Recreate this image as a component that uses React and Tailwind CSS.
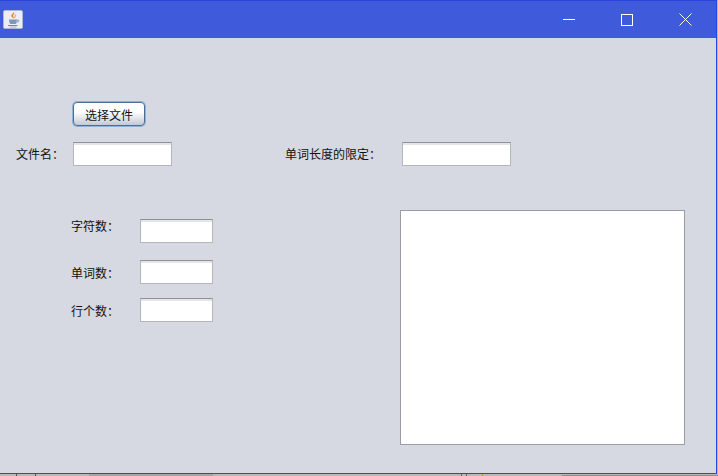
const cjk = 'font-["Noto_Sans_CJK_SC","Liberation_Sans",sans-serif]';

function JavaIcon() {
  return (
    <svg width="20" height="19" viewBox="0 0 20 19" className="block">
      <rect x="0.5" y="0.5" width="19" height="18" rx="1.5" fill="#eceef3" stroke="#aeb6d6" />
      <path d="M11 2c1.4 1.8-1.6 2.8-.8 4.6.3.7.8 1.2 1 1.9-2.3-.7-3.3-2.2-2.8-3.5C8.900 3.700 10.600 3.300 11 2z" fill="#e9802c" />
      <path d="M12.500 4.500c.6 1.300-1.200 1.800-.6 3.500" fill="none" stroke="#f2a45e" strokeWidth="1.200" />
      <path d="M6 9.500h8l-.5 3.500c-.3.800-1 1-1.500 1H8c-.6 0-1.200-.3-1.500-1z" fill="#7f97b8" />
      <path d="M14 10.200h1.500c.8 0 .8 1.800-1.700 2" fill="none" stroke="#7f97b8" />
      <path d="M5 15.500h9.500" stroke="#6f8cb0" />
      <path d="M6.500 17h7" stroke="#a5b6cc" />
    </svg>
  );
}

function WindowButtons() {
  return (
    <div className="flex items-center">
      <div className="flex h-[38px] w-[58px] items-center justify-center">
        <div className="h-px w-3 bg-white" />
      </div>
      <div className="flex h-[38px] w-[58px] items-center justify-center">
        <div className="h-3 w-3 border border-white" />
      </div>
      <div className="flex h-[38px] w-[58px] items-center justify-center">
        <svg width="13" height="13" viewBox="0 0 13 13">
          <path d="M.5.5l12 12M12.500.5l-12 12" stroke="#fff" strokeWidth="1" fill="none" />
        </svg>
      </div>
    </div>
  );
}

function Field({ className }) {
  return (
    <div className={`h-6 border border-[#b4b6b9] border-t-[#8f9295] bg-white shadow-[inset_0_2px_0_#e4e5e8] ${className}`} />
  );
}

function Label({ children, className = '' }) {
  return <span className={`text-xs leading-4 text-[#111] ${className}`}>{children}</span>;
}

function CountRow({ label, labelClass = '', className = '' }) {
  return (
    <div className={`flex ${className}`}>
      <Label className={`w-[69px] self-start ${labelClass}`}>{label}</Label>
      <Field className="w-[73px]" />
    </div>
  );
}

export default function App() {
  return (
    <div className={`relative h-[476px] w-[718px] overflow-hidden bg-[#b9b9bb] ${cjk}`}>
      <div className="flex h-[474px] w-[717px] flex-col border-r border-b border-[#2a45dd] bg-[#d6d9e1]">
        {/* title bar */}
        <div className="flex h-[38px] shrink-0 items-center justify-between border-t border-[#2a45dd] bg-[#3f5bdb] pl-[3px] pr-0.5">
          <JavaIcon />
          <WindowButtons />
        </div>

        {/* button */}
        <div className="ml-[73px] mt-16">
          <button className="flex h-6 w-[72px] items-center justify-center rounded-[4px] border border-[#4f6c92] bg-gradient-to-b from-white from-40% to-[#c4c9d4] pt-px text-xs leading-4 text-[#111] shadow-[0_0_0_1px_#8fb3d8]">
            选择文件
          </button>
        </div>

        {/* file row */}
        <div className="mt-4 flex items-center pl-4">
          <Label className="w-[57px]">文件名：</Label>
          <Field className="w-[99px]" />
          <Label className="ml-[113px] w-[117px]">单词长度的限定：</Label>
          <Field className="w-[109px]" />
        </div>

        {/* counts and text area */}
        <div className="mt-[44px] flex">
          <div className="ml-[71px] w-[329px] pt-[9px]">
            <CountRow label="字符数：" labelClass="-mt-px" />
            <CountRow label="单词数：" labelClass="mt-[5px]" className="mt-[17px]" />
            <CountRow label="行个数：" labelClass="mt-[5px]" className="mt-[14px]" />
          </div>
          <div className="h-[235px] w-[285px] border border-[#9a9da6] bg-white" />
        </div>
      </div>

      {/* desktop peeking out below the window */}
      <div className="absolute bottom-0 left-[89px] h-0.5 w-[124px] bg-[#a5a5a7]" />
      <div className="absolute bottom-0 left-[16px] h-0.5 w-px bg-[#555]" />
      <div className="absolute bottom-0 left-[35px] h-0.5 w-px bg-[#555]" />
      <div className="absolute bottom-0 left-[461px] h-0.5 w-px bg-[#666]" />
      <div className="absolute bottom-0 left-[466px] h-0.5 w-px bg-[#666]" />
      <div className="absolute bottom-0 left-[482px] h-0.5 w-px bg-[#e08a20]" />
      <div className="absolute bottom-0 left-[562px] h-px w-[156px] bg-[#8c8c8e]" />
    </div>
  );
}
